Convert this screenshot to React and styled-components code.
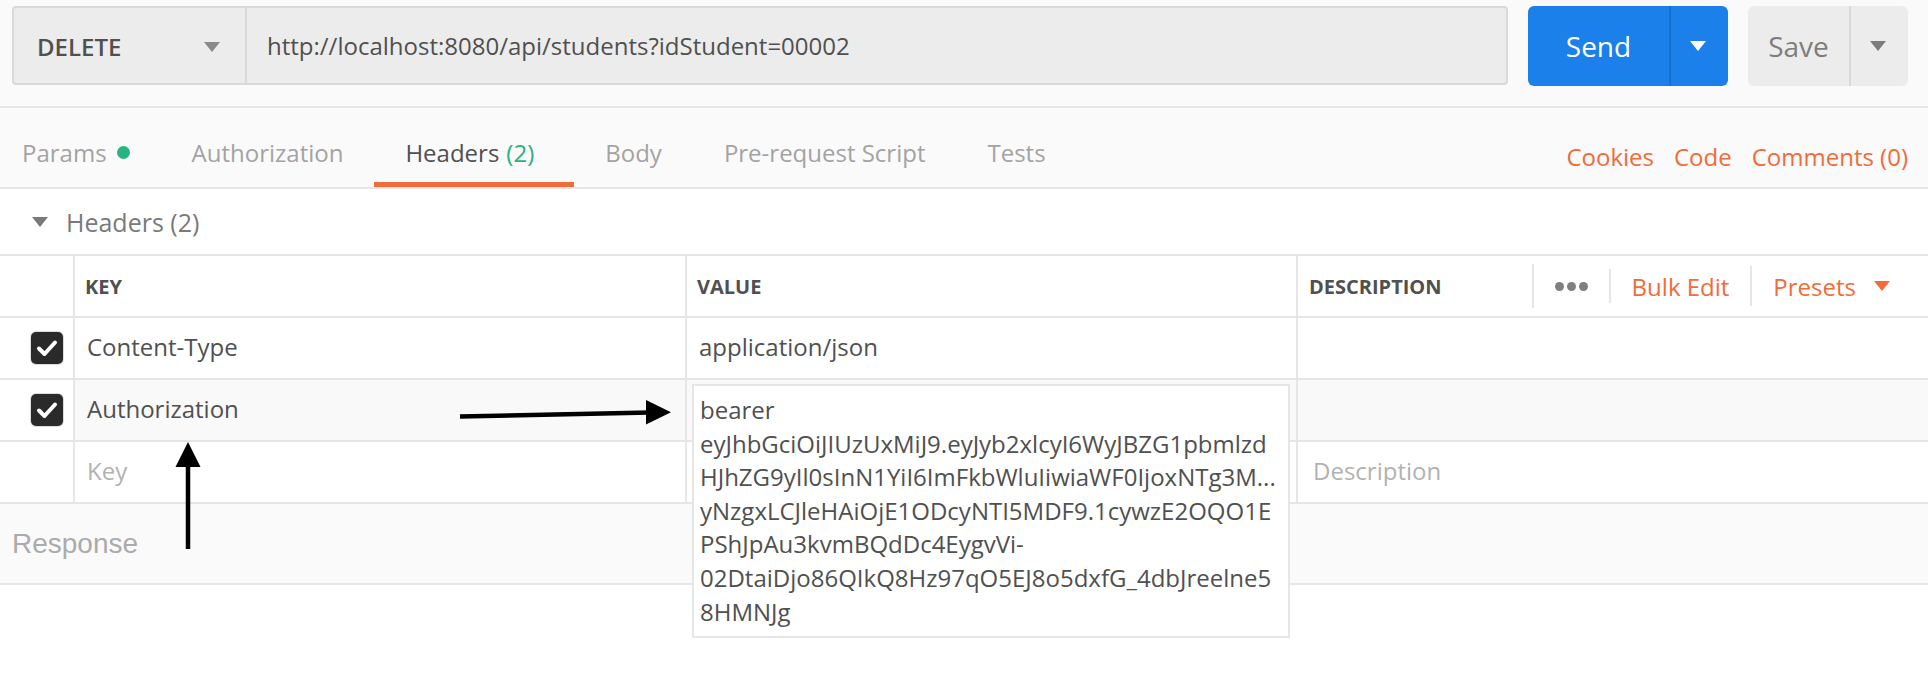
import React from "react";
import styled, { createGlobalStyle } from "styled-components";

const Global = createGlobalStyle`
  html, body { margin: 0; padding: 0; background: #ffffff; }
  body { font-family: "Open Sans", "Noto Sans", sans-serif; color: #505050; }
  * { box-sizing: border-box; }
`;

const Page = styled.div`
  position: relative;
  width: 1928px;
  height: 674px;
  overflow: hidden;
  background: #ffffff;
`;

const TopBar = styled.div`
  display: flex;
  align-items: flex-start;
  gap: 20px;
  height: 108px;
  padding: 6px 20px 0 12px;
  background: #fafafa;
  border-bottom: 2px solid #e6e6e6;
`;

const RequestBox = styled.div`
  flex: 1;
  display: flex;
  height: 79px;
  background: #ececec;
  border: 2px solid #d9d9d9;
  border-radius: 4px;
`;

const MethodSelect = styled.div`
  width: 233px;
  display: flex;
  align-items: center;
  justify-content: space-between;
  padding: 2px 25px 0 23px;
  border-right: 2px solid #d9d9d9;
  font-size: 24px;
  font-weight: 600;
  color: #505050;
`;

const UrlText = styled.div`
  flex: 1;
  display: flex;
  align-items: center;
  padding-left: 20px;
  font-size: 24px;
  color: #505050;
`;

const Caret = styled.span`
  display: inline-block;
  width: 0;
  height: 0;
  border-left: ${(p) => p.$w || 8}px solid transparent;
  border-right: ${(p) => p.$w || 8}px solid transparent;
  border-top: ${(p) => p.$h || 10}px solid ${(p) => p.$color || "#808080"};
`;

const SplitButton = styled.div`
  display: flex;
  width: ${(p) => p.$width}px;
  height: 80px;
  border-radius: 6px;
  background: ${(p) => p.$bg};
  color: ${(p) => p.$fg};
  overflow: hidden;
`;

const SplitLabel = styled.div`
  flex: 1;
  display: flex;
  align-items: center;
  justify-content: center;
  font-size: 28px;
`;

const SplitCaret = styled.div`
  width: 59px;
  display: flex;
  align-items: center;
  justify-content: center;
  border-left: 2px solid ${(p) => p.$line};
  padding-right: 4px;
`;

const TabsRow = styled.div`
  display: flex;
  height: 81px;
  background: #fafafa;
  border-bottom: 2px solid #e6e6e6;
`;

const Tab = styled.div`
  display: flex;
  align-items: center;
  padding: 14px 31px 0;
  border-bottom: 5px solid ${(p) => (p.$active ? "#f26b3a" : "transparent")};
  font-size: 24px;
  color: ${(p) => (p.$active ? "#505050" : "#a3a3a3")};
  white-space: nowrap;
  &:first-child { padding-left: 22px; }
`;

const Count = styled.span`
  color: #26b47f;
  margin-left: 7px;
  padding-right: 9px;
`;

const Dot = styled.span`
  width: 13px;
  height: 13px;
  border-radius: 50%;
  background: #26b47f;
  margin-left: 10px;
`;

const TabLinks = styled.div`
  margin-left: auto;
  display: flex;
  align-items: center;
  gap: 20px;
  padding: 18px 20px 0 0;
  font-size: 24px;
  color: #f26b3a;
`;

const Section = styled.div`
  height: 65px;
  display: flex;
  align-items: center;
  gap: 18px;
  padding-left: 32px;
  font-size: 25px;
  color: #7a7a7a;
`;

const Table = styled.div`
  border-top: 2px solid #e6e6e6;
`;

const Row = styled.div`
  display: grid;
  grid-template-columns: 75px 612px 611px 1fr;
  height: 62px;
  border-bottom: 2px solid #e6e6e6;
`;

const Cell = styled.div`
  position: relative;
  display: flex;
  align-items: center;
  padding-left: ${(p) => (p.$pad != null ? p.$pad : 12)}px;
  padding-bottom: ${(p) => (p.$lift ? 4 : 0)}px;
  border-right: ${(p) => (p.$last ? "none" : "2px solid #e6e6e6")};
  background: ${(p) => p.$bg || "transparent"};
  font-size: 24px;
  color: ${(p) => (p.$placeholder ? "#b2b2b2" : "#505050")};
  white-space: nowrap;
`;

const HeadLabel = styled.span`
  font-size: 20px;
  font-weight: 700;
  color: #505050;
`;

const Actions = styled.div`
  margin-left: auto;
  margin-right: 38px;
  display: flex;
  align-items: center;
  height: 100%;
`;

const ActionSep = styled.span`
  width: 2px;
  height: ${(p) => p.$h}px;
  background: #e6e6e6;
`;

const ActionItem = styled.span`
  display: flex;
  align-items: center;
  gap: 18px;
  padding: 0 21px;
  font-size: 24px;
  color: #f26b3a;
  &:last-child { padding-right: 0; }
`;

const Dots = styled.span`
  display: flex;
  gap: 3px;
  padding: 0 21px;
`;

const DotSmall = styled.span`
  width: 9px;
  height: 9px;
  border-radius: 50%;
  background: #7f7f7f;
`;

const CheckBox = styled.span`
  width: 32px;
  height: 32px;
  border-radius: 5px;
  background: #2a2a2a;
  box-shadow: 0 0 0 1px #dcdcdc;
  display: flex;
  align-items: center;
  justify-content: center;
`;

const Popover = styled.div`
  position: absolute;
  top: 4px;
  left: 5px;
  width: 598px;
  height: 254px;
  z-index: 2;
  padding: 7px 6px;
  background: #ffffff;
  border: 2px solid #e6e6e6;
  font-size: 24px;
  line-height: 33.6px;
  color: #505050;
`;

const PopLine = styled.div`
  white-space: nowrap;
  overflow: hidden;
`;

const ResponseBar = styled.div`
  height: 81px;
  display: flex;
  align-items: center;
  padding-left: 12px;
  background: #fafafa;
  border-bottom: 2px solid #e6e6e6;
  font-family: "Liberation Sans", Arial, sans-serif;
  font-size: 28px;
  color: #ababab;
`;

const Overlay = styled.svg`
  position: absolute;
  top: 0;
  left: 0;
  pointer-events: none;
  z-index: 5;
`;

const Check = () => (
  <CheckBox>
    <svg width="24" height="24" viewBox="0 0 24 24">
      <path d="M4 12.5 L9.5 18 L20 6.5" fill="none" stroke="#ffffff" strokeWidth="4" strokeLinecap="round" strokeLinejoin="round" />
    </svg>
  </CheckBox>
);

const tokenLines = [
  "bearer",
  "eyJhbGciOiJIUzUxMiJ9.eyJyb2xlcyI6WyJBZG1pbmlzd",
  "HJhZG9yIl0sInN1YiI6ImFkbWluIiwiaWF0IjoxNTg3M...",
  "yNzgxLCJleHAiOjE1ODcyNTI5MDF9.1cywzE2OQO1E",
  "PShJpAu3kvmBQdDc4EygvVi-",
  "02DtaiDjo86QIkQ8Hz97qO5EJ8o5dxfG_4dbJreelne5",
  "8HMNJg",
];

export default function App() {
  return (
    <Page>
      <Global />
      <TopBar>
        <RequestBox>
          <MethodSelect>
            <span>DELETE</span>
            <Caret $color="#8a8a8a" />
          </MethodSelect>
          <UrlText>http://localhost:8080/api/students?idStudent=00002</UrlText>
        </RequestBox>
        <SplitButton $width={200} $bg="#1b80e9" $fg="#ffffff">
          <SplitLabel>Send</SplitLabel>
          <SplitCaret $line="#1670d2">
            <Caret $color="#ffffff" />
          </SplitCaret>
        </SplitButton>
        <SplitButton $width={160} $bg="#ececec" $fg="#7d7d7d">
          <SplitLabel>Save</SplitLabel>
          <SplitCaret $line="#d9d9d9">
            <Caret $color="#7d7d7d" />
          </SplitCaret>
        </SplitButton>
      </TopBar>

      <TabsRow>
        <Tab>
          Params
          <Dot />
        </Tab>
        <Tab>Authorization</Tab>
        <Tab $active>
          Headers<Count>(2)</Count>
        </Tab>
        <Tab>Body</Tab>
        <Tab>Pre-request Script</Tab>
        <Tab>Tests</Tab>
        <TabLinks>
          <span>Cookies</span>
          <span>Code</span>
          <span>Comments (0)</span>
        </TabLinks>
      </TabsRow>

      <Section>
        <Caret $color="#7a7a7a" />
        <span>Headers (2)</span>
      </Section>

      <Table>
        <Row>
          <Cell />
          <Cell $pad={10}>
            <HeadLabel>KEY</HeadLabel>
          </Cell>
          <Cell $pad={10}>
            <HeadLabel>VALUE</HeadLabel>
          </Cell>
          <Cell $pad={11} $last>
            <HeadLabel>DESCRIPTION</HeadLabel>
            <Actions>
              <ActionSep $h={44} />
              <Dots>
                <DotSmall />
                <DotSmall />
                <DotSmall />
              </Dots>
              <ActionSep $h={34} />
              <ActionItem>Bulk Edit</ActionItem>
              <ActionSep $h={40} />
              <ActionItem>
                Presets
                <Caret $color="#f26b3a" />
              </ActionItem>
            </Actions>
          </Cell>
        </Row>
        <Row>
          <Cell $pad={31}>
            <Check />
          </Cell>
          <Cell $lift>Content-Type</Cell>
          <Cell $lift>application/json</Cell>
          <Cell $last />
        </Row>
        <Row>
          <Cell $pad={31}>
            <Check />
          </Cell>
          <Cell $lift $bg="#f9f9f9">Authorization</Cell>
          <Cell $bg="#f9f9f9">
            <Popover>
              {tokenLines.map((l) => (
                <PopLine key={l}>{l}</PopLine>
              ))}
            </Popover>
          </Cell>
          <Cell $bg="#f9f9f9" $last />
        </Row>
        <Row>
          <Cell />
          <Cell $lift $placeholder>Key</Cell>
          <Cell />
          <Cell $lift $placeholder $pad={15} $last>
            Description
          </Cell>
        </Row>
      </Table>

      <ResponseBar>Response</ResponseBar>

      <Overlay width="1928" height="674" viewBox="0 0 1928 674">
        <line x1="460" y1="416.5" x2="650" y2="412.5" stroke="#000" strokeWidth="4.5" />
        <polygon points="646,400 671,412.3 646,424.5" fill="#000" />
        <line x1="188" y1="549" x2="188" y2="462" stroke="#000" strokeWidth="4.5" />
        <polygon points="175.5,467 188,442 200.5,467" fill="#000" />
      </Overlay>
    </Page>
  );
}
